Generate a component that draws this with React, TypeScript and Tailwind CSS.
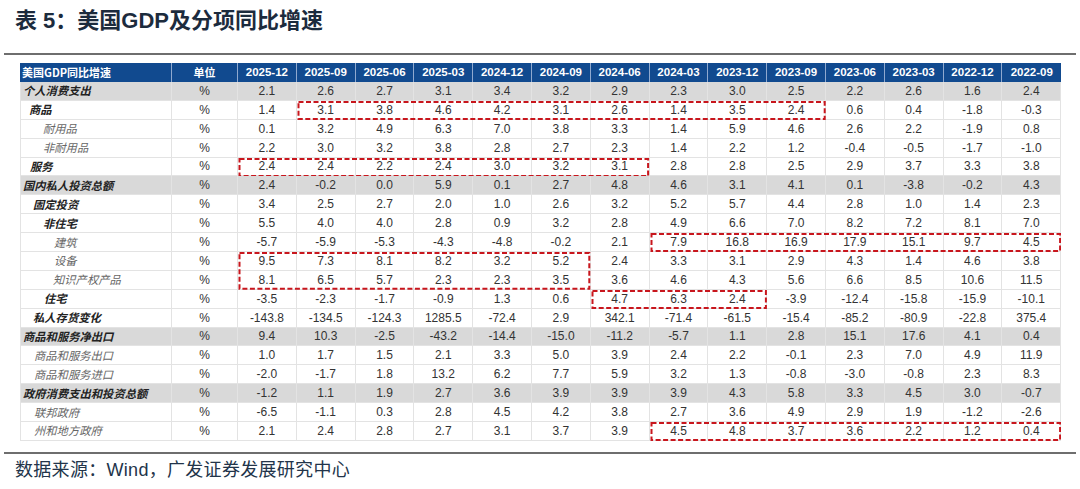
import React from "react";

const cols = [
  "2025-12", "2025-09", "2025-06", "2025-03", "2024-12", "2024-09", "2024-06",
  "2024-03", "2023-12", "2023-09", "2023-06", "2023-03", "2022-12", "2022-09",
];

type Row = { label: string; pad: number; bold: boolean; gray?: boolean; v: string };

const rows: Row[] = [
  { label: "个人消费支出", pad: 2, bold: true, gray: true, v: "2.1 2.6 2.7 3.1 3.4 3.2 2.9 2.3 3.0 2.5 2.2 2.6 1.6 2.4" },
  { label: "商品", pad: 8, bold: true, v: "1.4 3.1 3.8 4.6 4.2 3.1 2.6 1.4 3.5 2.4 0.6 0.4 -1.8 -0.3" },
  { label: "耐用品", pad: 22, bold: false, v: "0.1 3.2 4.9 6.3 7.0 3.8 3.3 1.4 5.9 4.6 2.6 2.2 -1.9 0.8" },
  { label: "非耐用品", pad: 22, bold: false, v: "2.2 3.0 3.2 3.8 2.8 2.7 2.3 1.4 2.2 1.2 -0.4 -0.5 -1.7 -1.0" },
  { label: "服务", pad: 9, bold: true, v: "2.4 2.4 2.2 2.4 3.0 3.2 3.1 2.8 2.8 2.5 2.9 3.7 3.3 3.8" },
  { label: "国内私人投资总额", pad: 2, bold: true, gray: true, v: "2.4 -0.2 0.0 5.9 0.1 2.7 4.8 4.6 3.1 4.1 0.1 -3.8 -0.2 4.3" },
  { label: "固定投资", pad: 12, bold: true, v: "3.4 2.5 2.7 2.0 1.0 2.6 3.2 5.2 5.7 4.4 2.8 1.0 1.4 2.3" },
  { label: "非住宅", pad: 22, bold: true, v: "5.5 4.0 4.0 2.8 0.9 3.2 2.8 4.9 6.6 7.0 8.2 7.2 8.1 7.0" },
  { label: "建筑", pad: 33, bold: false, v: "-5.7 -5.9 -5.3 -4.3 -4.8 -0.2 2.1 7.9 16.8 16.9 17.9 15.1 9.7 4.5" },
  { label: "设备", pad: 33, bold: false, v: "9.5 7.3 8.1 8.2 3.2 5.2 2.4 3.3 3.1 2.9 4.3 1.4 4.6 3.8" },
  { label: "知识产权产品", pad: 32, bold: false, v: "8.1 6.5 5.7 2.3 2.3 3.5 3.6 4.6 4.3 5.6 6.6 8.5 10.6 11.5" },
  { label: "住宅", pad: 23, bold: true, v: "-3.5 -2.3 -1.7 -0.9 1.3 0.6 4.7 6.3 2.4 -3.9 -12.4 -15.8 -15.9 -10.1" },
  { label: "私人存货变化", pad: 12, bold: true, v: "-143.8 -134.5 -124.3 1285.5 -72.4 2.9 342.1 -71.4 -61.5 -15.4 -85.2 -80.9 -22.8 375.4" },
  { label: "商品和服务净出口", pad: 2, bold: true, gray: true, v: "9.4 10.3 -2.5 -43.2 -14.4 -15.0 -11.2 -5.7 1.1 2.8 15.1 17.6 4.1 0.4" },
  { label: "商品和服务出口", pad: 13, bold: false, v: "1.0 1.7 1.5 2.1 3.3 5.0 3.9 2.4 2.2 -0.1 2.3 7.0 4.9 11.9" },
  { label: "商品和服务进口", pad: 13, bold: false, v: "-2.0 -1.7 1.8 13.2 6.2 7.7 5.9 3.2 1.3 -0.8 -3.0 -0.8 2.3 8.3" },
  { label: "政府消费支出和投资总额", pad: 2, bold: true, gray: true, v: "-1.2 1.1 1.9 2.7 3.6 3.9 3.9 3.9 4.3 5.8 3.3 4.5 3.0 -0.7" },
  { label: "联邦政府", pad: 13, bold: false, v: "-6.5 -1.1 0.3 2.8 4.5 4.2 3.8 2.7 3.6 4.9 2.9 1.9 -1.2 -2.6" },
  { label: "州和地方政府", pad: 13, bold: false, v: "2.1 2.4 2.8 2.7 3.1 3.7 3.9 4.5 4.8 3.7 3.6 2.2 1.2 0.4" },
];

// highlighted ranges: [row0, row1, col0, col1]
const boxes = [
  [1, 1, 1, 9],
  [4, 4, 0, 6],
  [8, 8, 7, 13],
  [9, 10, 0, 5],
  [11, 11, 6, 8],
  [18, 18, 7, 13],
];

const ROW_H = 18.9;
const COL_W = 58.8;
const DATA_X = 218;

const gridCols = "grid grid-cols-[152px_66px_repeat(14,58.8px)] h-[18.9px]";

const DashBox = ({ b }: { b: number[] }) => {
  const [r0, r1, c0, c1] = b;
  const w = COL_W * (c1 - c0 + 1);
  const h = ROW_H * (r1 - r0 + 1);
  return (
    <svg
      className="absolute pointer-events-none"
      style={{ left: DATA_X + COL_W * c0, top: ROW_H * (r0 + 1), width: w, height: h }}
      width={w}
      height={h}
    >
      <rect x={1.5} y={1} width={w - 3} height={h - 2} fill="none" stroke="#c8161d" strokeWidth={2} strokeDasharray="5 2.5" />
    </svg>
  );
};

const App = () => {
  return (
    <div className="w-[1080px] h-[489px] bg-white overflow-hidden font-['Liberation_Sans','Noto_Sans_CJK_SC',sans-serif]">
      <div className="pl-[15px] pt-[8px] text-[22px] leading-[26px] font-bold text-[#1c2b3d]">
        表 5：美国GDP及分项同比增速
      </div>
      <div className="mt-[19px] mx-[4px] border-t-2 border-[#6e6e6e]" />

      <div className="relative ml-[20px] mt-[8px] w-[1041.2px]">
        <div className={`${gridCols} bg-[#114a8f] text-white font-bold text-[11.5px]`}>
          <div className="flex items-center pl-[2px] border-r border-[#8fa9cf] font-['Noto_Sans_CJK_SC',sans-serif] text-[11px]">
            美国GDP同比增速
          </div>
          <div className="flex items-center justify-center border-r border-[#8fa9cf] font-['Noto_Sans_CJK_SC',sans-serif] text-[11px]">
            单位
          </div>
          {cols.map((c, i) => (
            <div key={c} className={`flex items-center justify-center ${i < cols.length - 1 ? "border-r border-[#8fa9cf]" : ""}`}>
              {c}
            </div>
          ))}
        </div>

        {rows.map((r) => (
          <div
            key={r.label}
            className={`${gridCols} ${r.gray ? "bg-[#d9d9d9]" : "bg-white"} text-[12px] text-[#333]`}
          >
            <div
              className={`flex items-center border-l border-r border-b border-[#e3e3e3] italic font-['Noto_Sans_CJK_SC',sans-serif] text-[11.3px] ${
                r.bold ? "font-bold text-[#222]" : "font-normal text-[#666]"
              }`}
              style={{ paddingLeft: r.pad }}
            >
              {r.label}
            </div>
            <div className="flex items-center justify-center border-r border-b border-[#e3e3e3]">%</div>
            {r.v.split(" ").map((x, i) => (
              <div key={i} className="flex items-center justify-center border-r border-b border-[#e3e3e3]">
                {x}
              </div>
            ))}
          </div>
        ))}

        {boxes.map((b, i) => (
          <DashBox key={i} b={b} />
        ))}
      </div>

      <div className="mt-[11px] mx-[4px] border-t-2 border-[#6e6e6e]" />
      <div className="pl-[15px] mt-[4px] text-[18px] leading-[24px] text-[#22344a] tracking-[0.3px]">
        数据来源：Wind，广发证券发展研究中心
      </div>
    </div>
  );
};

export default App;
